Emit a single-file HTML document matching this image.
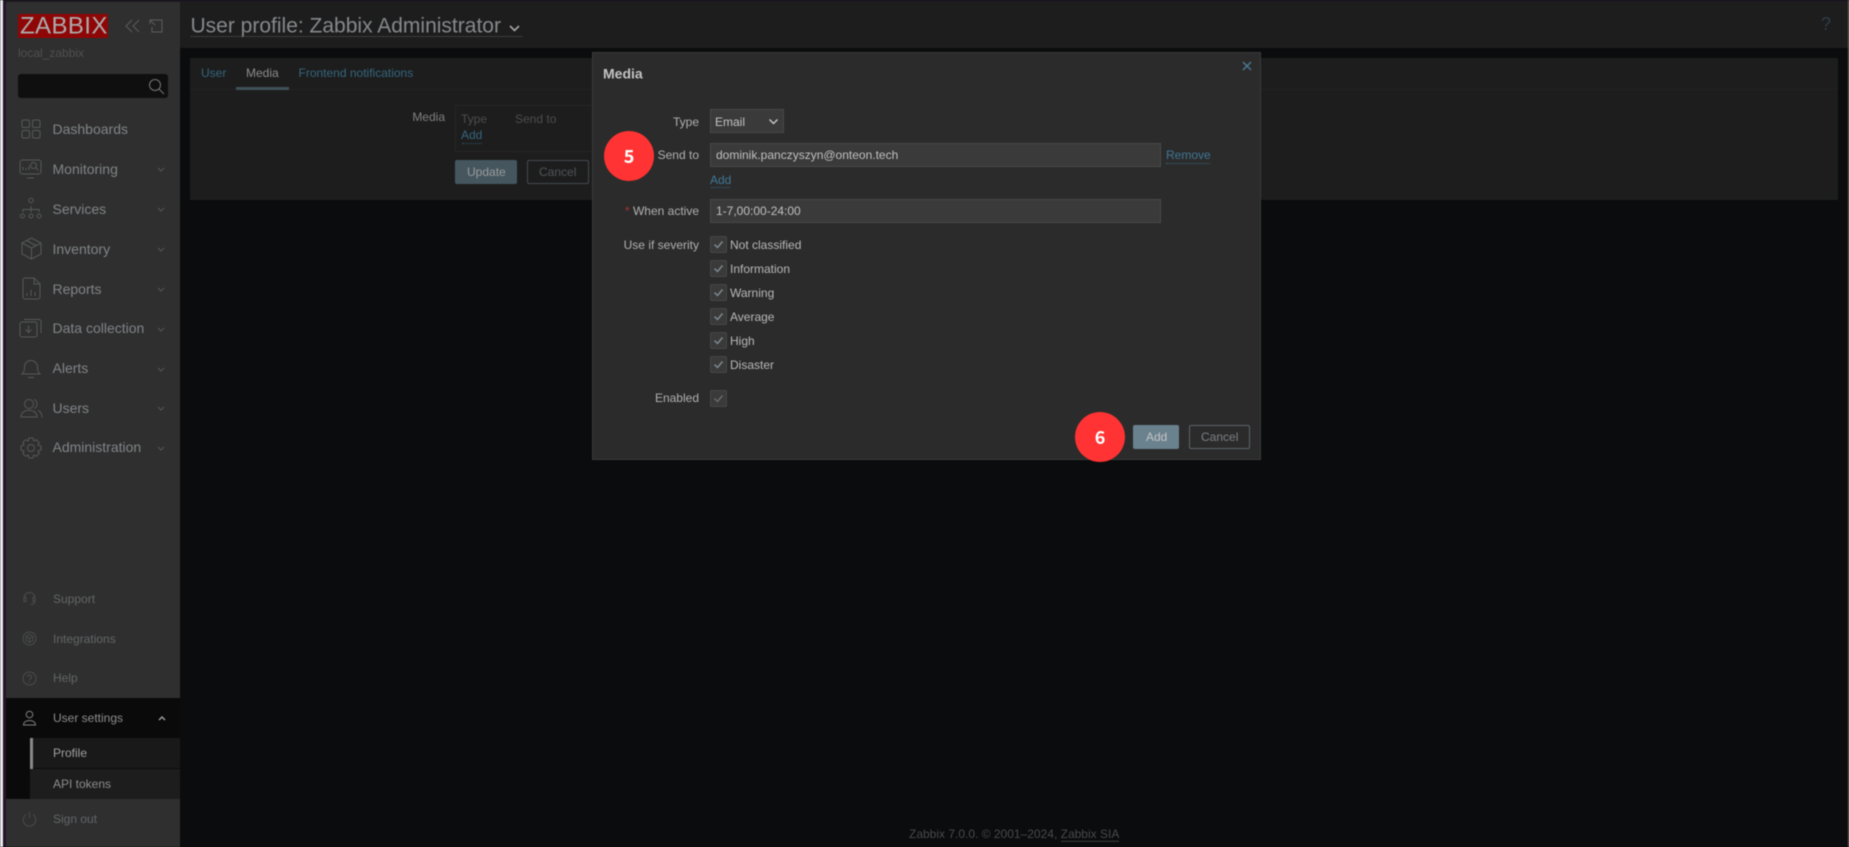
<!DOCTYPE html>
<html lang="en">
<head>
<meta charset="utf-8">
<title>User profile: Zabbix Administrator</title>
<style>
html,body{margin:0;padding:0;background:#0b0c0e;}
body{width:1849px;height:847px;overflow:hidden;position:relative;font-family:"Liberation Sans",sans-serif;font-size:12px;color:#999;}
#w{position:absolute;left:0;top:0;width:1849px;height:847px;filter:blur(.4px);}
.a{position:absolute;}
.t{position:absolute;white-space:nowrap;transform:translateY(-50%);line-height:1.2;}
.r{text-align:right;}
.m{font-size:14px;color:#808487;left:52.5px;transform:translateY(calc(-50% - .5px));}
.s{font-size:12px;color:#626567;left:53px;}
.chev{position:absolute;left:157px;width:8px;height:5px;}
.ic{position:absolute;fill:none;stroke:#565859;stroke-width:1;}
.lbl{color:#b0b0b0;text-align:right;right:1150px;}
.cb{position:absolute;left:710px;width:15px;height:15px;background:#3a3a3a;border:1px solid #474747;border-radius:2px;}
.cb svg{position:absolute;left:2px;top:2px;width:11px;height:11px;fill:none;stroke:#7f8b92;stroke-width:1.4;}
.ct{left:730px;color:#b8b8b8;}
.inp{position:absolute;left:710px;width:449px;height:22px;background:#3a3a3a;border:1px solid #484848;}
.link{color:#35667f;}
.badge{position:absolute;width:50px;height:50px;border-radius:50%;background:#ff3333;color:#fff;font-weight:bold;font-size:18px;text-align:center;line-height:50px;font-family:"Noto Sans CJK JP","Liberation Sans",sans-serif;}
</style>
</head>
<body>
<div id="w">
<!-- edges -->
<div class="a" style="left:0;top:0;width:3px;height:847px;background:#e9e9e9"></div>
<div class="a" style="left:3px;top:0;width:3px;height:847px;background:#24142a"></div>
<div class="a" style="left:3px;top:0;width:1846px;height:2px;background:#1c1820"></div>
<div class="a" style="left:1848px;top:0;width:1px;height:847px;background:#777"></div>

<!-- sidebar -->
<div class="a" style="left:6px;top:2px;width:174px;height:845px;background:#2f2f2f"></div>
<div class="a" style="left:18px;top:14px;width:90px;height:24px;background:#8f0606"></div>
<div class="t" style="left:20px;top:27px;font-size:24px;color:#ababab;letter-spacing:.4px">ZABBIX</div>
<svg class="ic" style="left:124px;top:17px;stroke:#5c5c5c" width="18" height="18" viewBox="0 0 18 18"><path d="M8 3L2 9l6 6M15 3L9 9l6 6"/></svg>
<svg class="ic" style="left:148px;top:18px;stroke:#5c5c5c" width="16" height="16" viewBox="0 0 16 16"><path d="M5 2H14V14H4V9M2 2l5 5M2 6V2h4"/></svg>
<div class="t" style="left:18px;top:53px;color:#505050;font-size:12px">local_zabbix</div>
<div class="a" style="left:18px;top:74px;width:150px;height:24px;background:#0f0f0f;border-radius:3px"></div>
<svg class="ic" style="left:147px;top:77px;stroke:#777" width="18" height="18" viewBox="0 0 18 18"><circle cx="8" cy="8" r="5.5"/><path d="M12 12l5 5"/></svg>

<!-- main menu -->
<svg class="ic" style="left:21px;top:119px" width="20" height="20" viewBox="0 0 20 20"><rect x="1" y="1" width="7.5" height="7.5" rx="1.5"/><rect x="11.5" y="1" width="7.5" height="7.5" rx="1.5"/><rect x="1" y="11.5" width="7.5" height="7.5" rx="1.5"/><rect x="11.5" y="11.5" width="7.5" height="7.5" rx="1.5"/></svg>
<div class="t m" style="top:129.5px">Dashboards</div>
<svg class="ic" style="left:19px;top:158px" width="24" height="22" viewBox="0 0 24 22"><rect x="1" y="2" width="21" height="14" rx="2.5"/><path d="M8 20h7M4 12V9M7 12V10M10 12V8"/><circle cx="14.5" cy="7.5" r="3"/><path d="M17 10l2.500 2.500"/></svg>
<div class="t m" style="top:169.5px">Monitoring</div>
<svg class="chev" style="top:167px" viewBox="0 0 8 5"><path d="M1 1l3 3 3-3" fill="none" stroke="#55575a"/></svg>
<svg class="ic" style="left:19px;top:197px" width="24" height="23" viewBox="0 0 24 23"><circle cx="12" cy="3.500" r="2.200"/><path d="M12 9v5M4 15v-2.500h16V15M12 12.500V15"/><circle cx="3.500" cy="19" r="2"/><circle cx="12" cy="19" r="2"/><circle cx="20" cy="19" r="2"/></svg>
<div class="t m" style="top:209.500px">Services</div>
<svg class="chev" style="top:207px" viewBox="0 0 8 5"><path d="M1 1l3 3 3-3" fill="none" stroke="#55575a"/></svg>
<svg class="ic" style="left:21px;top:237px" width="21" height="23" viewBox="0 0 21 23"><path d="M10.500 1L20 6v11l-9.500 5L1 17V6zM1 6l9.500 5L20 6M10.500 11v11M5.500 3.500l9.500 5"/></svg>
<div class="t m" style="top:249.500px">Inventory</div>
<svg class="chev" style="top:247px" viewBox="0 0 8 5"><path d="M1 1l3 3 3-3" fill="none" stroke="#55575a"/></svg>
<svg class="ic" style="left:22px;top:277px" width="19" height="23" viewBox="0 0 19 23"><path d="M3 1h9l6 6v13a2 2 0 0 1-2 2H3a2 2 0 0 1-2-2V3a2 2 0 0 1 2-2zM12 1v6h6M5 19v-3M9 19v-6M13 19v-4"/></svg>
<div class="t m" style="top:289.500px">Reports</div>
<svg class="chev" style="top:287px" viewBox="0 0 8 5"><path d="M1 1l3 3 3-3" fill="none" stroke="#55575a"/></svg>
<svg class="ic" style="left:19px;top:318px" width="24" height="20" viewBox="0 0 24 20"><rect x="1" y="4" width="17" height="15" rx="2"/><path d="M5 1.500h15a2 2 0 0 1 2 2V15M9.500 7.500v7M6.500 11.500l3 3 3-3"/></svg>
<div class="t m" style="top:329px">Data collection</div>
<svg class="chev" style="top:327px" viewBox="0 0 8 5"><path d="M1 1l3 3 3-3" fill="none" stroke="#55575a"/></svg>
<svg class="ic" style="left:21px;top:357px" width="20" height="22" viewBox="0 0 20 22"><path d="M1 17c2-2 2.500-3 2.500-7a6.500 6.500 0 0 1 13 0c0 4 .5 5 2.500 7zM7 20.500h6"/></svg>
<div class="t m" style="top:369px">Alerts</div>
<svg class="chev" style="top:367px" viewBox="0 0 8 5"><path d="M1 1l3 3 3-3" fill="none" stroke="#55575a"/></svg>
<svg class="ic" style="left:20px;top:398px" width="23" height="21" viewBox="0 0 23 21"><circle cx="9" cy="6" r="4.500"/><path d="M1 19c0-9 16-9 16 0zM14 1.500c4 1 4 7.500 0 9M18 12.500c3 1 4 4 4 7"/></svg>
<div class="t m" style="top:408.500px">Users</div>
<svg class="chev" style="top:406px" viewBox="0 0 8 5"><path d="M1 1l3 3 3-3" fill="none" stroke="#55575a"/></svg>
<svg class="ic" style="left:20px;top:437px" width="22" height="22" viewBox="0 0 22 22"><circle cx="11" cy="11" r="3.500"/><path d="M9 1h4l.8 3 2.500-1.300 2.900 2.900L17.900 8.100 21 9v4l-3.100.9 1.300 2.500-2.900 2.900-2.500-1.300L13 21H9l-.8-3-2.500 1.300-2.900-2.900 1.300-2.500L1 13V9l3.100-.9-1.300-2.500 2.900-2.900 2.500 1.300z"/></svg>
<div class="t m" style="top:448px">Administration</div>
<svg class="chev" style="top:446px" viewBox="0 0 8 5"><path d="M1 1l3 3 3-3" fill="none" stroke="#55575a"/></svg>

<!-- bottom menu -->
<svg class="ic" style="left:22px;top:591px;stroke:#4a4c4e" width="15" height="15" viewBox="0 0 15 15"><path d="M2 9V7a5.500 5.500 0 0 1 11 0v2M2 6.500v4h2v-4zM11 6.500h2v4h-2zM12.500 11c0 1.500-1.500 2.500-4 2.500"/></svg>
<div class="t s" style="top:598.500px">Support</div>
<svg class="ic" style="left:22px;top:631px;stroke:#4a4c4e" width="15" height="15" viewBox="0 0 15 15"><circle cx="7.500" cy="7.500" r="6.500"/><path d="M7.500 3.500l3.500 2v4l-3.500 2-3.500-2v-4zM4 5.500l3.500 2 3.500-2M7.500 7.500v4"/></svg>
<div class="t s" style="top:638.500px">Integrations</div>
<svg class="ic" style="left:22px;top:671px;stroke:#4a4c4e" width="15" height="15" viewBox="0 0 15 15"><circle cx="7.500" cy="7.500" r="6.500"/><path d="M5.500 6a2 2 0 1 1 3 1.700c-.7.400-1 .8-1 1.500M7.500 10.500v1.200"/></svg>
<div class="t s" style="top:678px">Help</div>

<div class="a" style="left:6px;top:698px;width:174px;height:101px;background:#0a0a0a"></div>
<div class="a" style="left:30px;top:738px;width:150px;height:30px;background:#191919"></div>
<div class="a" style="left:30px;top:769px;width:150px;height:30px;background:#1d1d1d"></div>
<div class="a" style="left:30px;top:738px;width:3px;height:31px;background:#8a8a8a"></div>
<svg class="ic" style="left:22px;top:710px;stroke:#808080" width="15" height="16" viewBox="0 0 15 16"><circle cx="7.500" cy="4.500" r="3.300"/><path d="M1.500 15c0-6 12-6 12 0z"/></svg>
<div class="t" style="left:53px;top:718px;color:#8d8d8d">User settings</div>
<svg class="chev" style="top:716px;left:158px" viewBox="0 0 8 5"><path d="M1 4l3-3 3 3" fill="none" stroke="#a0a0a0" stroke-width="1.400"/></svg>
<div class="t" style="left:53px;top:753px;color:#a0a0a0">Profile</div>
<div class="t" style="left:53px;top:784px;color:#8d8d8d">API tokens</div>
<svg class="ic" style="left:22px;top:811px;stroke:#4a4c4e" width="15" height="16" viewBox="0 0 15 16"><path d="M4 3.500a6.300 6.300 0 1 0 7 0M7.500 1v6"/></svg>
<div class="t s" style="top:819px">Sign out</div>

<!-- header -->
<div class="a" style="left:180px;top:2px;width:1668px;height:46px;background:#1d1d1d"></div>
<div class="t" style="left:190.500px;top:26px;font-size:21px;color:#85898c">User profile: Zabbix Administrator</div>
<svg class="a" style="left:508px;top:24px" width="13" height="9" viewBox="0 0 13 9"><path d="M2 2l4.500 4.500L11 2" fill="none" stroke="#a5a5a5" stroke-width="1.600"/></svg>
<div class="a" style="left:191px;top:36px;width:331px;border-bottom:1px dotted #5a5a5a"></div>
<div class="t" style="left:1821px;top:25px;font-size:18px;color:#2f3c48">?</div>

<!-- panel -->
<div class="a" style="left:190px;top:58px;width:1648px;height:142px;background:#1d1d1d"></div>
<div class="a" style="left:190px;top:89px;width:1648px;height:1px;background:#232323"></div>
<div class="t link" style="left:201px;top:73px">User</div>
<div class="t" style="left:246px;top:73px;color:#8d8d8d">Media</div>
<div class="a" style="left:236px;top:87px;width:53px;height:3px;background:#3f5159"></div>
<div class="t link" style="left:298.500px;top:73px">Frontend notifications</div>
<div class="t" style="right:1404px;top:116.500px;color:#808080">Media</div>
<div class="a" style="left:455px;top:105px;width:200px;height:45px;border:1px solid #262626;border-right:0"></div>
<div class="t" style="left:461px;top:118.500px;color:#4d4d4d">Type</div>
<div class="t" style="left:515px;top:118.500px;color:#4d4d4d">Send to</div>
<div class="t link" style="left:461px;top:135px">Add</div>
<div class="a" style="left:462px;top:143px;width:20px;border-bottom:1px dotted #2c5266"></div>
<div class="a" style="left:455px;top:160px;width:62px;height:24px;background:#45565f;border-radius:2px"></div>
<div class="t" style="left:467px;top:172px;color:#9b9b9b">Update</div>
<div class="a" style="left:527px;top:160px;width:60px;height:22px;border:1px solid #454a4d;border-radius:2px"></div>
<div class="t" style="left:539px;top:172px;color:#505558">Cancel</div>

<!-- footer -->
<div class="t" style="left:909px;top:833.500px;color:#4a4a4a">Zabbix 7.0.0. © 2001–2024, <span style="border-bottom:1px solid #404040">Zabbix SIA</span></div>

<!-- modal -->
<div class="a" style="left:592px;top:52px;background:#2b2b2b;border:1px solid #3a3a3a;width:667px;height:406px"></div>
<div class="t" style="left:603px;top:74px;font-size:14px;font-weight:bold;color:#c4c4c4">Media</div>
<svg class="a" style="left:1242px;top:61px" width="10" height="10" viewBox="0 0 10 10"><path d="M1 1l8 8M9 1l-8 8" fill="none" stroke="#4c7a94" stroke-width="1.400"/></svg>

<div class="t lbl" style="top:121.500px">Type</div>
<div class="a" style="left:710px;top:109px;width:72px;height:22px;background:#3a3a3a;border:1px solid #484848"></div>
<div class="t" style="left:715px;top:121.500px;color:#c4c4c4">Email</div>
<svg class="a" style="left:768px;top:118px" width="11" height="8" viewBox="0 0 11 8"><path d="M1.500 1.500L5.500 5.500 9.500 1.500" fill="none" stroke="#c4c4c4" stroke-width="1.500"/></svg>

<div class="t lbl" style="top:155px">Send to</div>
<div class="inp" style="top:143px"></div>
<div class="t" style="left:716px;top:155px;color:#c0c0c0">dominik.panczyszyn@onteon.tech</div>
<div class="t link" style="left:1166px;top:155px;color:#3f7796">Remove</div>
<div class="a" style="left:1166px;top:163px;width:44px;border-bottom:1px dotted #35647e"></div>
<div class="t link" style="left:710px;top:180px;color:#3f7796">Add</div>
<div class="a" style="left:711px;top:187px;width:19px;border-bottom:1px dotted #35647e"></div>

<div class="t lbl" style="top:211px"><span style="color:#a33">*</span> When active</div>
<div class="inp" style="top:199px"></div>
<div class="t" style="left:716px;top:211px;color:#c0c0c0">1-7,00:00-24:00</div>

<div class="t lbl" style="top:244.500px">Use if severity</div>
<div class="cb" style="top:236px"><svg viewBox="0 0 11 11"><path d="M1.500 5.500l3 3 5-6"/></svg></div>
<div class="t ct" style="top:244.500px">Not classified</div>
<div class="cb" style="top:260px"><svg viewBox="0 0 11 11"><path d="M1.500 5.500l3 3 5-6"/></svg></div>
<div class="t ct" style="top:268.500px">Information</div>
<div class="cb" style="top:284px"><svg viewBox="0 0 11 11"><path d="M1.500 5.500l3 3 5-6"/></svg></div>
<div class="t ct" style="top:292.500px">Warning</div>
<div class="cb" style="top:308px"><svg viewBox="0 0 11 11"><path d="M1.500 5.500l3 3 5-6"/></svg></div>
<div class="t ct" style="top:316.500px">Average</div>
<div class="cb" style="top:332px"><svg viewBox="0 0 11 11"><path d="M1.500 5.500l3 3 5-6"/></svg></div>
<div class="t ct" style="top:340.500px">High</div>
<div class="cb" style="top:356px"><svg viewBox="0 0 11 11"><path d="M1.500 5.500l3 3 5-6"/></svg></div>
<div class="t ct" style="top:364.500px">Disaster</div>
<div class="t lbl" style="top:398px">Enabled</div>
<div class="cb" style="top:390px"><svg viewBox="0 0 11 11" style="stroke:#646d73"><path d="M1.500 5.500l3 3 5-6"/></svg></div>

<div class="a" style="left:1133px;top:425px;width:46px;height:24px;background:#6a818e;border-radius:2px"></div>
<div class="t" style="left:1146px;top:437px;color:#c4c4c4">Add</div>
<div class="a" style="left:1189px;top:425px;width:59px;height:22px;border:1px solid #5b6367;border-radius:2px"></div>
<div class="t" style="left:1201px;top:437px;color:#7b8084">Cancel</div>

<div class="badge" style="left:604px;top:131px">5</div>
<div class="badge" style="left:1075px;top:412px">6</div>
</div>
</body>
</html>
